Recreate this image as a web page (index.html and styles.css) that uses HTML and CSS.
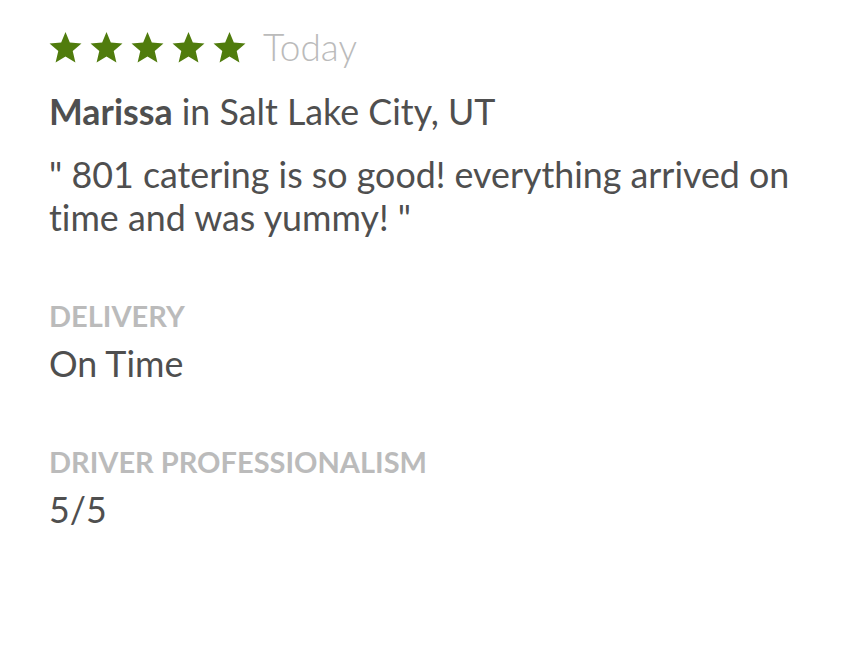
FILE: index.html
```html
<!DOCTYPE html>
<html lang="en">
<head>
<meta charset="utf-8">
<title>Review</title>
<link rel="stylesheet" href="styles.css">
</head>
<body>
<div class="review">
  <div class="rating-row">
    <div class="stars">
      <svg class="star" viewBox="0 0 32 30"><polygon points="16,0 20.2,10.1 31.5,11.1 23,18.5 25.6,29.5 16,23.7 6.4,29.5 9,18.5 0.5,11.1 11.8,10.1"/></svg>
      <svg class="star" viewBox="0 0 32 30"><polygon points="16,0 20.2,10.1 31.5,11.1 23,18.5 25.6,29.5 16,23.7 6.4,29.5 9,18.5 0.5,11.1 11.8,10.1"/></svg>
      <svg class="star" viewBox="0 0 32 30"><polygon points="16,0 20.2,10.1 31.5,11.1 23,18.5 25.6,29.5 16,23.7 6.4,29.5 9,18.5 0.5,11.1 11.8,10.1"/></svg>
      <svg class="star" viewBox="0 0 32 30"><polygon points="16,0 20.2,10.1 31.5,11.1 23,18.5 25.6,29.5 16,23.7 6.4,29.5 9,18.5 0.5,11.1 11.8,10.1"/></svg>
      <svg class="star" viewBox="0 0 32 30"><polygon points="16,0 20.2,10.1 31.5,11.1 23,18.5 25.6,29.5 16,23.7 6.4,29.5 9,18.5 0.5,11.1 11.8,10.1"/></svg>
    </div>
    <span class="date">Today</span>
  </div>
  <p class="author"><strong>Marissa</strong> in Salt Lake City, UT</p>
  <p class="quote">" 801 catering is so good! everything arrived on time and was yummy! "</p>
  <div class="field">
    <div class="label">Delivery</div>
    <div class="value">On Time</div>
  </div>
  <div class="field">
    <div class="label">Driver Professionalism</div>
    <div class="value">5/5</div>
  </div>
</div>
</body>
</html>
```
FILE: styles.css
```css
html, body {
  margin: 0;
  background: #ffffff;
}
body {
  font-family: Lato, "Open Sans", sans-serif;
  font-variant-ligatures: none;
  color: #4f4f4f;
}
.review {
  padding: 27px 49px 0 49px;
  width: 760px;
}
.rating-row {
  display: flex;
  align-items: center;
  height: 40px;
}
.stars {
  display: flex;
  gap: 8px;
}
.star {
  width: 33px;
  height: 31px;
  fill: #507c0d;
  display: block;
}
.date {
  margin-left: 17px;
  font-size: 37px;
  font-weight: 300;
  color: #bbbbbb;
  line-height: 40px;
}
.author {
  margin: 23px 0 0 0;
  font-size: 35.8px;
  line-height: 44px;
}
.author strong {
  font-weight: 700;
}
.quote {
  margin: 19px 0 0 0;
  font-size: 35.8px;
  line-height: 43px;
}
.field {
  margin-top: 60px;
}
.field + .field {
  margin-top: 59px;
}
.label {
  font-size: 29px;
  font-weight: 700;
  text-transform: uppercase;
  color: #bbbbbb;
  line-height: 34px;
}
.value {
  margin-top: 9px;
  font-size: 35.8px;
  line-height: 44px;
}
```
